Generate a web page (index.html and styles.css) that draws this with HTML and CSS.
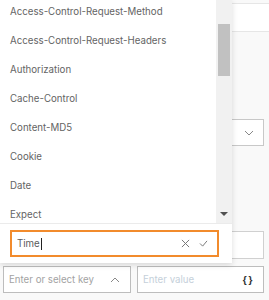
FILE: index.html
```html
<!DOCTYPE html>
<html lang="en">
<head>
    <meta charset="UTF-8">
    <meta name="viewport" content="width=device-width, initial-scale=1.0">
    <title>Header Key Picker</title>
    <link rel="stylesheet" href="styles.css">
</head>
<body>

<div class="form">
    <div class="field-top"></div>
    <div class="select-box">
        <svg class="chev" width="10" height="6" viewBox="0 0 10 6"><path d="M1 1l4 4 4-4" fill="none" stroke="#888" stroke-width="1"/></svg>
    </div>
    <div class="plain-box"></div>
    <div class="kv-row">
        <div class="kv-input">
            <span class="placeholder">Enter or select key</span>
            <svg width="10" height="6" viewBox="0 0 10 6"><path d="M1 5l4-4 4 4" fill="none" stroke="#888" stroke-width="1"/></svg>
        </div>
        <div class="kv-input">
            <span class="placeholder value">Enter value</span>
            <span class="braces">{ }</span>
        </div>
    </div>
</div>

<!-- dropdown overlay -->
<div class="dropdown">
    <div class="list-wrap">
        <ul class="options">
            <li>Access-Control-Request-Method</li>
            <li>Access-Control-Request-Headers</li>
            <li>Authorization</li>
            <li>Cache-Control</li>
            <li>Content-MD5</li>
            <li>Cookie</li>
            <li>Date</li>
            <li>Expect</li>
        </ul>
        <div class="scrollbar">
            <div class="thumb"></div>
            <div class="arrow-down"></div>
        </div>
    </div>
    <div class="search">
        <div class="search-input">
            <span class="typed">Time</span><span class="caret"></span>
            <span class="icons">
                <svg width="9" height="9" viewBox="0 0 10 10"><path d="M1 1l8 8M9 1l-8 8" fill="none" stroke="#777" stroke-width="1.1"/></svg>
                <svg width="9" height="7" viewBox="0 0 10 8"><path d="M1 4l3 3 5-6" fill="none" stroke="#777" stroke-width="1.1"/></svg>
            </span>
        </div>
    </div>
</div>

</body>
</html>
```

FILE: styles.css
```css
html, body {
    margin: 0;
    padding: 0;
}
body {
    font-family: 'Inter', 'Roboto', sans-serif;
    background-color: #f9f9f9;
    width: 269px;
    height: 300px;
    overflow: hidden;
    position: relative;
}
.form {
    display: flex;
    flex-direction: column;
    padding: 0 5px 0 3px;
}
.field-top {
    height: 27px;
    margin-top: 3px;
    margin-right: -5px;
    background-color: white;
    border-top: 1px solid #e6e6e6;
    border-bottom: 1px solid #e6e6e6;
}
.select-box {
    height: 25px;
    margin-top: 87px;
    background-color: white;
    border: 1px solid #c8c8c8;
    display: flex;
    align-items: center;
    justify-content: flex-end;
    padding-right: 9px;
}
.plain-box {
    height: 26px;
    margin-top: 85px;
    background-color: white;
    border: 1px solid #d0d0d0;
}
.kv-row {
    display: flex;
    gap: 6px;
    margin-top: 7px;
}
.kv-input {
    height: 25px;
    background-color: white;
    border: 1px solid #bdbdbd;
    display: flex;
    align-items: center;
    justify-content: space-between;
    padding: 0 10px 0 5px;
    font-size: 9.7px;
}
.kv-input:first-child {
    width: 111px;
}
.kv-input:last-child {
    flex: 1;
}
.placeholder {
    color: #a3a3a3;
}
.placeholder.value {
    color: #c5d0da;
}
.braces {
    color: #333;
    font-weight: bold;
    font-size: 10px;
    word-spacing: -1px;
}

.dropdown {
    position: absolute;
    left: 0;
    top: 0;
    width: 232px;
    height: 263px;
    background-color: white;
    box-shadow: 0 2px 6px rgba(0, 0, 0, 0.14);
    display: flex;
    flex-direction: column;
}
.list-wrap {
    height: 223px;
    display: flex;
    overflow: hidden;
    border-bottom: 1px solid #ebebeb;
}
.options {
    list-style: none;
    margin: -3px 0 0 0;
    padding: 0 0 0 10px;
    flex: 1;
}
.options li {
    height: 29px;
    line-height: 29px;
    font-size: 9.7px;
    color: #646464;
    white-space: nowrap;
}
.scrollbar {
    width: 16px;
    background-color: #f1f1f1;
    display: flex;
    flex-direction: column;
    align-items: center;
}
.thumb {
    width: 12px;
    height: 52px;
    margin-top: 24px;
    background-color: #c1c1c1;
}
.arrow-down {
    margin-top: auto;
    margin-bottom: 7px;
    width: 0;
    height: 0;
    border-left: 4px solid transparent;
    border-right: 4px solid transparent;
    border-top: 4px solid #505050;
}
.search {
    padding: 6px 13px 0 10px;
}
.search-input {
    height: 23px;
    border: 2px solid #f28b2c;
    display: flex;
    align-items: center;
    padding: 0 9px 0 5px;
    font-size: 9.7px;
    color: #5a5a5a;
}
.caret {
    width: 1px;
    height: 12px;
    background-color: #222;
    margin-left: 1px;
}
.icons {
    margin-left: auto;
    display: flex;
    align-items: center;
    gap: 9px;
}
```
